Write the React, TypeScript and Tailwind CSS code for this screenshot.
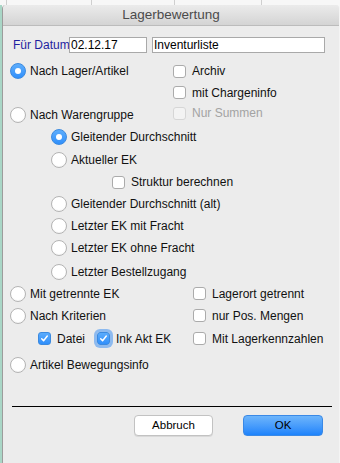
import React from "react";

const Check = () => (
  <svg width="13" height="13" viewBox="0 0 13 13" className="block">
    <path d="M3.2 6.8 L5.4 9.2 L9.8 3.6" fill="none" stroke="#ffffff" strokeWidth="1.7" strokeLinecap="round" strokeLinejoin="round" />
  </svg>
);

function Radio({ checked = false, label }: { checked?: boolean; label: string }) {
  return (
    <div className="flex items-center gap-[4px]">
      {checked ? (
        <span className="w-[16px] h-[16px] rounded-full bg-gradient-to-b from-[#5eaefc] to-[#2f8ffb] border border-[#3b8ae0] flex items-center justify-center shrink-0">
          <span className="w-[6px] h-[6px] rounded-full bg-white" />
        </span>
      ) : (
        <span className="w-[16px] h-[16px] rounded-full bg-white border border-[#b3b3b3] shadow-[inset_0_-1px_1px_rgba(0,0,0,0.04)] shrink-0" />
      )}
      <span className="text-[12px] text-[#111] leading-none whitespace-nowrap">{label}</span>
    </div>
  );
}

function Box({
  checked = false,
  disabled = false,
  focus = false,
  label,
}: {
  checked?: boolean;
  disabled?: boolean;
  focus?: boolean;
  label: string;
}) {
  let box = "w-[13px] h-[13px] rounded-[3px] shrink-0 border ";
  if (checked) box += "bg-gradient-to-b from-[#5aabfc] to-[#2f8ffb] border-[#3b8ae0] ";
  else if (disabled) box += "bg-[#f3f3f3] border-[#d6d6d6] ";
  else box += "bg-white border-[#ababab] ";
  if (focus) box += "shadow-[0_0_0_3px_rgba(110,170,240,0.75)] ";
  return (
    <div className="flex items-center gap-[6px]">
      <span className={box + "flex items-center justify-center"}>{checked ? <Check /> : null}</span>
      <span className={"text-[12px] leading-none whitespace-nowrap " + (disabled ? "text-[#a3a3a3]" : "text-[#111]")}>
        {label}
      </span>
    </div>
  );
}

export default function App() {
  return (
    <div className="w-[340px] h-[463px] overflow-hidden bg-[#f7f7f7] flex flex-col font-['Liberation_Sans',Arial,sans-serif]">
      <div className="h-[5px] flex shrink-0">
        <div className="w-[7px] border-r border-[#cfcfcf]" />
        <div className="w-[85px] border-r border-[#cfcfcf]" />
        <div className="w-[83px] border-r border-[#cfcfcf]" />
        <div className="w-[87px] border-r border-[#cfcfcf]" />
        <div className="flex-1" />
      </div>
      <div className="flex flex-1">
        <div className="w-[2px] bg-[#a9d6c6]" />
        <div className="flex-1 flex flex-col border-l border-[#9c9c9c] border-r border-r-[#f4f4f4] bg-[#ececec] rounded-tl-[4px] rounded-tr-[4px] overflow-hidden">
          <div className="h-[21px] shrink-0 bg-gradient-to-b from-[#ebebeb] to-[#d4d4d4] border-b border-[#bcbcbc] flex items-center justify-center">
            <span className="text-[13.5px] text-[#4b4b4b] leading-none">Lagerbewertung</span>
          </div>

          <div className="flex flex-col">
            <div className="mt-[11px] h-[16px] flex items-center">
              <span className="ml-[10px] w-[56px] text-[12px] text-[#1f1fa0] leading-none whitespace-nowrap">Für Datum</span>
              <div className="w-[78px] h-[16px] bg-white border border-[#a9a9a9] flex items-center pl-[1px] text-[12px] text-black leading-none">
                02.12.17
              </div>
              <div className="ml-[5px] w-[173px] h-[16px] bg-white border border-[#a9a9a9] flex items-center pl-[1px] text-[12px] text-black leading-none">
                Inventurliste
              </div>
            </div>

            {/* Row 1 */}
            <div className="mt-[7px] h-[22px] flex items-center">
              <div className="w-[170px] pl-[7px]">
                <Radio checked label="Nach Lager/Artikel" />
              </div>
              <Box label="Archiv" />
            </div>
            {/* Row 2 */}
            <div className="h-[21px] flex items-center">
              <div className="w-[170px]" />
              <Box label="mit Chargeninfo" />
            </div>
            {/* Row 3 */}
            <div className="h-[23px] flex items-center">
              <div className="w-[170px] pl-[7px]">
                <Radio label="Nach Warengruppe" />
              </div>
              <div className="-mt-[3px]">
                <Box disabled label="Nur Summen" />
              </div>
            </div>
            <div className="h-[22px] flex items-center pl-[48px]">
              <Radio checked label="Gleitender Durchschnitt" />
            </div>
            <div className="h-[23px] flex items-center pl-[48px]">
              <Radio label="Aktueller EK" />
            </div>
            <div className="h-[22px] flex items-center pl-[109px]">
              <Box label="Struktur berechnen" />
            </div>
            <div className="h-[22px] flex items-center pl-[48px]">
              <Radio label="Gleitender Durchschnitt (alt)" />
            </div>
            <div className="h-[21px] flex items-center pl-[48px]">
              <Radio label="Letzter EK mit Fracht" />
            </div>
            <div className="h-[24px] flex items-center pl-[48px]">
              <Radio label="Letzter EK ohne Fracht" />
            </div>
            <div className="h-[23px] flex items-center pl-[48px]">
              <Radio label="Letzter Bestellzugang" />
            </div>
            {/* Row 11 */}
            <div className="h-[21px] flex items-center">
              <div className="w-[190px] pl-[7px]">
                <Radio label="Mit getrennte EK" />
              </div>
              <Box label="Lagerort getrennt" />
            </div>
            <div className="h-[23px] flex items-center">
              <div className="w-[190px] pl-[7px]">
                <Radio label="Nach Kriterien" />
              </div>
              <Box label="nur Pos. Mengen" />
            </div>
            <div className="h-[23px] flex items-center">
              <div className="w-[190px] pl-[35px] flex items-center">
                <div className="w-[59px]">
                  <Box checked label="Datei" />
                </div>
                <Box checked focus label="Ink Akt EK" />
              </div>
              <Box label="Mit Lagerkennzahlen" />
            </div>
            <div className="h-[29px] flex items-center pl-[7px]">
              <Radio label="Artikel Bewegungsinfo" />
            </div>

            <div className="mt-[27px] ml-[9px] w-[320px] h-px bg-black" />

            <div className="mt-[8px] h-[21px] flex">
              <button className="ml-[131px] w-[79px] h-[21px] bg-white border border-[#c2c2c2] rounded-[4px] shadow-[0_1px_0_rgba(0,0,0,0.08)] text-[11.5px] text-black leading-none flex items-center justify-center">
                Abbruch
              </button>
              <button className="ml-[30px] w-[80px] h-[21px] bg-gradient-to-b from-[#6db5fb] to-[#1c83fb] border border-[#3a89e6] rounded-[4px] text-[11.5px] text-black leading-none flex items-center justify-center">
                OK
              </button>
            </div>
          </div>
        </div>
      </div>
    </div>
  );
}
